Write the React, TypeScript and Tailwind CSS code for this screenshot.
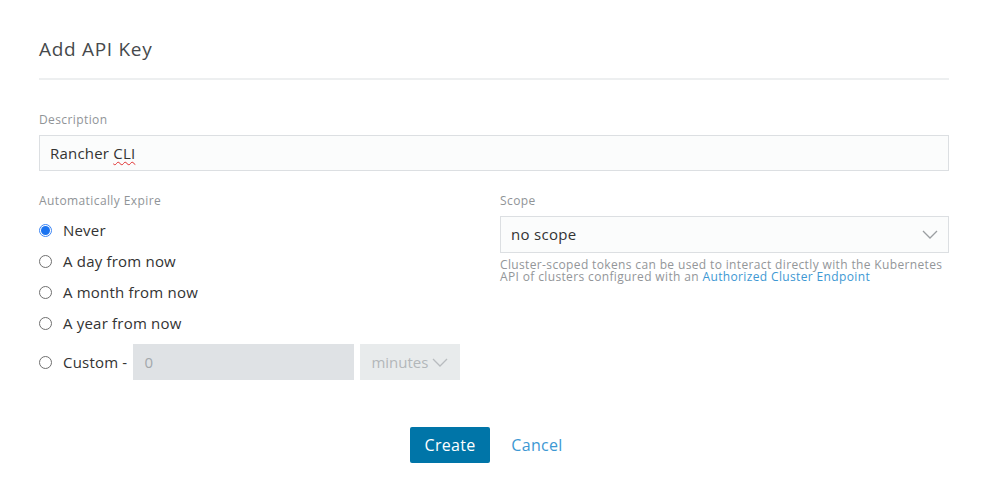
import React from "react";

const font = { fontFamily: '"Open Sans", "Noto Sans", sans-serif' };

function Radio({ checked, label }: { checked?: boolean; label: string }) {
  return (
    <label className="flex items-center gap-[11px] h-[31px] text-[15px] tracking-[0.2px] text-[#333]">
      {checked ? (
        <span className="w-[13px] h-[13px] rounded-full border border-[#3d86f5] flex items-center justify-center">
          <span className="w-[9px] h-[9px] rounded-full bg-[#1a73f0]" />
        </span>
      ) : (
        <span className="w-[13px] h-[13px] rounded-full border border-[#6f6f6f] bg-white" />
      )}
      <span>{label}</span>
    </label>
  );
}

function Chevron({ color }: { color: string }) {
  return (
    <svg width="16" height="9" viewBox="0 0 16 9" fill="none">
      <path d="M1 1l7 7 7-7" stroke={color} strokeWidth="1.3" />
    </svg>
  );
}

export default function App() {
  return (
    <div className="w-[984px] h-[502px] bg-white px-[39px] pt-[37px]" style={font}>
      <h1 className="text-[19px] leading-[24px] text-[#464a4c] tracking-[0.7px]">Add API Key</h1>
      <div className="mt-[17px] h-[2px] bg-[#edeff0] w-[910px]" />

      <div className="mt-[33px] text-[12px] leading-[14px] tracking-[0.4px] text-[#909497]">Description</div>
      <div className="mt-[8px] h-[36px] w-[910px] border border-[#dcdfe2] bg-[#fbfcfc] flex items-center px-[10px] text-[15px] tracking-[0.2px] text-[#333]">
        <span>
          Rancher{" "}
          <span className="underline decoration-wavy decoration-[#e03030] decoration-1 underline-offset-2">CLI</span>
        </span>
      </div>

      <div className="mt-[23px] grid grid-cols-[461px_449px]">
        <div>
          <div className="text-[12px] leading-[14px] tracking-[0.4px] text-[#909497]">Automatically Expire</div>
          <div className="mt-[7px] flex flex-col">
            <Radio checked label="Never" />
            <Radio label="A day from now" />
            <Radio label="A month from now" />
            <Radio label="A year from now" />
            <div className="mt-[5px] flex items-center h-[36px] text-[15px] tracking-[0.2px] text-[#333]">
              <span className="w-[13px] h-[13px] rounded-full border border-[#6f6f6f] bg-white" />
              <span className="ml-[11px]">Custom -</span>
              <div className="ml-[6px] w-[221px] h-[36px] bg-[#dfe2e5] flex items-center px-[11px] text-[#a3a8ac]">0</div>
              <div className="ml-[6px] w-[100px] h-[36px] bg-[#e8ebec] flex items-center justify-between pl-[11px] pr-[12px] text-[#b3b7ba] tracking-normal">
                <span>minutes</span>
                <Chevron color="#b8bcbf" />
              </div>
            </div>
          </div>
        </div>
        <div>
          <div className="text-[12px] leading-[14px] tracking-[0.4px] text-[#909497]">Scope</div>
          <div className="mt-[8px] h-[37px] border border-[#dcdfe2] bg-[#fbfcfc] flex items-center justify-between px-[10px] text-[15px] tracking-[0.3px] text-[#333]">
            <span>no scope</span>
            <Chevron color="#9a9ea1" />
          </div>
          <p className="mt-[6px] text-[12px] leading-[12px] tracking-[0.36px] text-[#939699]">
            Cluster-scoped tokens can be used to interact directly with the Kubernetes API of clusters configured with an{" "}
            <span className="text-[#3d98d3]">Authorized Cluster Endpoint</span>
          </p>
        </div>
      </div>

      <div className="mt-[47px] flex justify-center items-center pl-[4px]">
        <button className="w-[80px] h-[36px] bg-[#0075a8] rounded-[2px] text-white text-[16px] tracking-[0.3px]">Create</button>
        <span className="w-[88px] h-[36px] flex items-center justify-center pl-[6px] text-[16px] tracking-[0.3px] text-[#3d98d3]">Cancel</span>
      </div>
    </div>
  );
}
